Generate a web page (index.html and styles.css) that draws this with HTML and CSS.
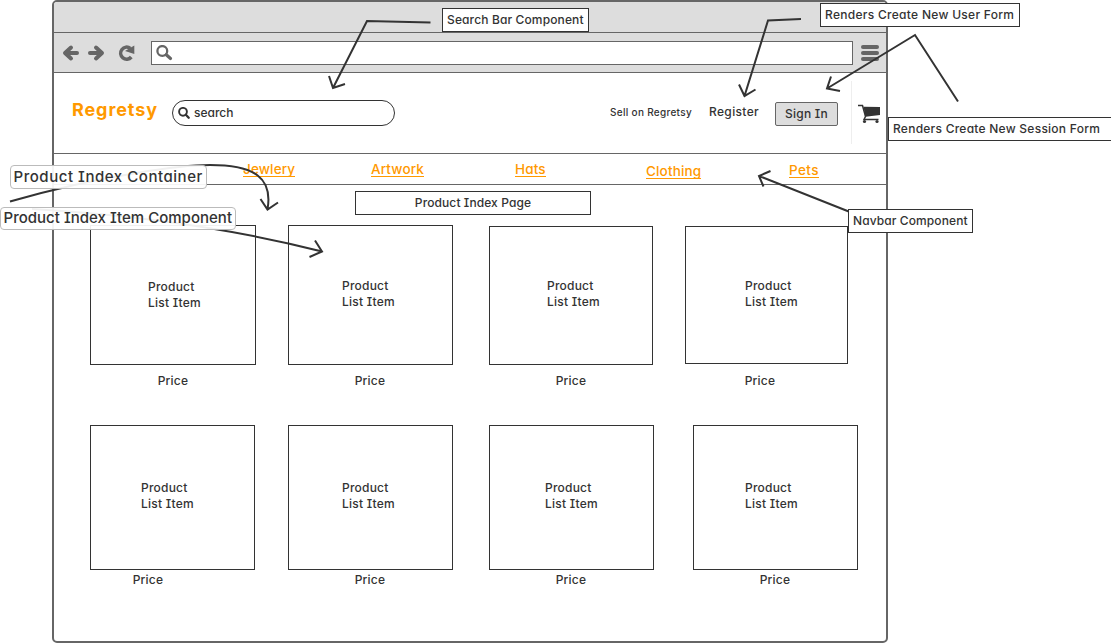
FILE: index.html
```html
<!DOCTYPE html>
<html lang="en">
<head>
<meta charset="utf-8">
<title>Regretsy</title>
<link rel="stylesheet" href="styles.css">
</head>
<body>
<div class="stage">
  <div class="browser">
    <div class="titlebar"></div>
    <div class="toolbar">
      <svg class="nav-icons" width="78" height="20" viewBox="0 0 78 20" fill="none" stroke="#666" stroke-width="4" stroke-linejoin="round" stroke-linecap="round">
        <path d="M16 10H5M10 4.500L4 10L10 15.500"/>
        <path d="M29 10H40M35 4.500L41 10L35 15.500"/>
        <path stroke-width="3.600" stroke-linecap="butt" d="M69.300 5.400A6 6 0 1 0 70.300 14"/>
        <path fill="#666" stroke="none" d="M73.300 2.500V11L64 8Z"/>
      </svg>
      <div class="url">
        <svg width="17" height="17" viewBox="0 0 17 17" fill="none" stroke="#666"><circle cx="6.300" cy="6" r="4.900" stroke-width="2.300"/><path d="M10.300 9.800L14.500 13.500" stroke-width="3.200" stroke-linecap="round"/></svg>
      </div>
      <div class="menu"><i></i><i></i><i></i></div>
    </div>
    <header class="header">
      <div class="brand">Regretsy</div>
      <div class="search">
        <svg width="12" height="12" viewBox="0 0 12 12" fill="none" stroke="#333"><circle cx="5" cy="4.800" r="3.900" stroke-width="1.900"/><path d="M7.900 7.700L10.700 10.700" stroke-width="2.300" stroke-linecap="round"/></svg>
        <span>search</span>
      </div>
      <div class="sell">Sell on Regretsy</div>
      <div class="register">Register</div>
      <div class="signin">Sign In</div>
      <div class="divider"></div>
      <svg class="cart" width="24" height="20" viewBox="0 0 24 20"><path d="M5.500 2.800L22 3V11L7.500 12.700Z" fill="#333"/><path d="M0 1.500H4.500L7.500 12.500L6 15.500H20.500" fill="none" stroke="#333" stroke-width="1.500"/><circle cx="6.500" cy="17.500" r="1.600" fill="#333"/><circle cx="19" cy="17.500" r="1.600" fill="#333"/></svg>
    </header>
    <nav class="nav">
      <a>Jewlery</a><a>Artwork</a><a>Hats</a><a class="low2">Clothing</a><a class="low1">Pets</a>
    </nav>
    <main>
      <div class="page-title">Product Index Page</div>
      <div class="row">
        <article class="card a1"><div class="thumb">Product<br>List Item</div><p>Price</p></article>
        <article class="card a2"><div class="thumb">Product<br>List Item</div><p>Price</p></article>
        <article class="card a3"><div class="thumb">Product<br>List Item</div><p>Price</p></article>
        <article class="card a4"><div class="thumb">Product<br>List Item</div><p>Price</p></article>
      </div>
      <div class="row second">
        <article class="card b1"><div class="thumb">Product<br>List Item</div><p>Price</p></article>
        <article class="card b2"><div class="thumb">Product<br>List Item</div><p>Price</p></article>
        <article class="card b3"><div class="thumb">Product<br>List Item</div><p>Price</p></article>
        <article class="card b4"><div class="thumb">Product<br>List Item</div><p>Price</p></article>
      </div>
    </main>
  </div>
  <svg class="arrows" width="1111" height="643" viewBox="0 0 1111 643" fill="none" stroke="#333" stroke-width="2">
    <path d="M430.500 22.500L367 21L333 88M329 76L333 88L345 84"/>
    <path d="M801 19L768 20.500L744.500 96M739 84.500L744.500 96L755.500 89.500"/>
    <path d="M958 101.500L915 35L827 88.500M831 76.500L827 88.500L840 91"/>
    <path d="M10 201.500C105 174 185 165 210 165C255 165 273 178 267.500 209.500M260.500 199L267.500 209.500L278 202.500"/>
    <path d="M32 209Q190 218 322 251.500M315 240.500L322 251.500L309.500 257"/>
    <path d="M850 212L759 176M770.500 171L759 176L763.500 186.500"/>
  </svg>
  <div class="label l-search">Search Bar Component</div>
  <div class="label l-user">Renders Create New User Form</div>
  <div class="label l-session">Renders Create New Session Form</div>
  <div class="label l-navbar">Navbar Component</div>
  <div class="tag t-container">Product Index Container</div>
  <div class="tag t-item">Product Index Item Component</div>
</div>
</body>
</html>
```
FILE: styles.css
```css
* { box-sizing: border-box; }
body {
  margin: 0;
  background: #fff;
  color: #333;
  font: 500 12px/16px Inter, "Open Sans", sans-serif;
  font-feature-settings: "cv08", "cv11";
  letter-spacing: 0.22px;
  white-space: nowrap;
}
svg { display: block; flex: none; }
p { margin: 0; }
.stage { position: relative; width: 1111px; height: 643px; overflow: hidden; }
.browser {
  width: 836px;
  height: 643px;
  margin-left: 52px;
  border: 2px solid #666;
  border-radius: 5px;
  overflow: hidden;
}
.titlebar { height: 31px; background: #ddd; border-bottom: 1px solid #666; }
.toolbar {
  display: flex;
  align-items: center;
  height: 40px;
  padding-left: 7px;
  background: #ddd;
  border-bottom: 1px solid #666;
}
.nav-icons { margin-right: 12px; }
.url { width: 702px; height: 24px; border: 1px solid #666; background: #fff; padding: 3px 4px; }
.menu { display: grid; gap: 2px; margin-left: 8px; }
.menu i { width: 18px; height: 4px; border-radius: 2px; background: #666; }

.header { display: flex; height: 81px; padding-left: 18px; border-bottom: 1px solid #666; }
.brand {
  width: 100px;
  padding-top: 25px;
  color: #ff9900;
  font-size: 18px;
  font-weight: 700;
  line-height: 24px;
  letter-spacing: 0.9px;
}
.search {
  display: flex;
  align-items: center;
  gap: 4px;
  width: 223px;
  height: 26px;
  margin-top: 27px;
  padding-left: 5px;
  border: 1px solid #333;
  border-radius: 13px;
  letter-spacing: 0;
}
.sell { width: 99px; margin: 31px 0 0 215px; font-size: 10px; letter-spacing: 0.3px; }
.register { width: 66px; margin-top: 31px; letter-spacing: 0.35px; }
.signin {
  width: 63px;
  height: 24px;
  margin-top: 29px;
  border: 1px solid #666;
  border-radius: 2px;
  background: #ddd;
  line-height: 22px;
  text-align: center;
}
.divider { width: 1px; height: 63px; margin: 8px 6px 0 13px; background: #eee; }
.cart { margin-top: 31px; }

.nav {
  display: grid;
  grid-template-columns: 128px 144px 131px 143px 40px;
  justify-items: start;
  align-items: start;
  height: 31px;
  padding: 8px 0 0 189px;
  border-bottom: 1px solid #666;
}
.nav a {
  height: 15px;
  color: #ff9900;
  font-size: 13.5px;
  border-bottom: 1px solid #ff9900;
  line-height: 14px;
  letter-spacing: 0.15px;
}
.nav .low1 { margin-top: 1px; letter-spacing: 0.4px; }
.nav .low2 { margin-top: 2px; }

.page-title {
  width: 236px;
  height: 24px;
  margin: 6px 0 10px 301px;
  border: 1px solid #333;
  line-height: 22px;
  text-align: center;
  letter-spacing: 0.1px;
}
.row { display: flex; height: 200px; padding-left: 36px; }
.card { width: 165px; flex: none; }
.thumb { height: 140px; border: 1px solid #333; padding-top: 52px; }
.second .thumb { height: 145px; padding-top: 54px; }
.card p { padding-top: 8px; text-indent: 0.7px; }
.second .card p { padding-top: 2px; }
.a1 { width: 166px; }
.a1 .thumb { padding: 53px 0 0 57px; }
.a1 p { padding-left: 67px; }
.a2, .b2 { margin-left: 32px; }
.b2 { margin-left: 33px; }
.a2 .thumb, .b2 .thumb { padding-left: 53px; }
.a2 p, .b2 p { padding-left: 66px; }
.a3 { width: 164px; margin: 1px 0 0 36px; }
.a3 .thumb { height: 139px; padding: 51px 0 0 57px; }
.a3 p, .b3 p { padding-left: 66px; }
.a4 { width: 163px; margin: 1px 0 0 32px; }
.a4 .thumb { height: 138px; padding: 51px 0 0 59px; }
.card.a4 p { padding: 9px 0 0 59px; }
.b1 .thumb { padding-left: 50px; }
.b1 p { padding-left: 42px; }
.b3 { margin-left: 36px; }
.b3 .thumb { padding-left: 55px; }
.b4 { margin-left: 39px; }
.b4 .thumb { padding-left: 51px; }
.b4 p { padding-left: 66px; }

.arrows { position: absolute; left: 0; top: 0; }
.label {
  position: absolute;
  height: 24px;
  padding-left: 4px;
  border: 1px solid #333;
  background: #fff;
  line-height: 22px;
}
.l-search { left: 442px; top: 8px; width: 147px; letter-spacing: 0.13px; }
.l-user { left: 820px; top: 3px; width: 200px; letter-spacing: 0.29px; }
.l-session { left: 888px; top: 117px; width: 230px; letter-spacing: 0.25px; }
.l-navbar { left: 848px; top: 209px; width: 125px; letter-spacing: 0.1px; }
.tag {
  position: absolute;
  border: 1px solid #bbb;
  border-radius: 4px;
  background: rgba(255, 255, 255, 0.93);
  font-size: 15px;
  padding-left: 2.5px;
}
.t-container { left: 10px; top: 165px; width: 197px; height: 24px; line-height: 22px; letter-spacing: 0.54px; }
.t-item { left: 0; top: 207px; width: 236px; height: 23px; line-height: 20px; letter-spacing: 0.02px; }
```
